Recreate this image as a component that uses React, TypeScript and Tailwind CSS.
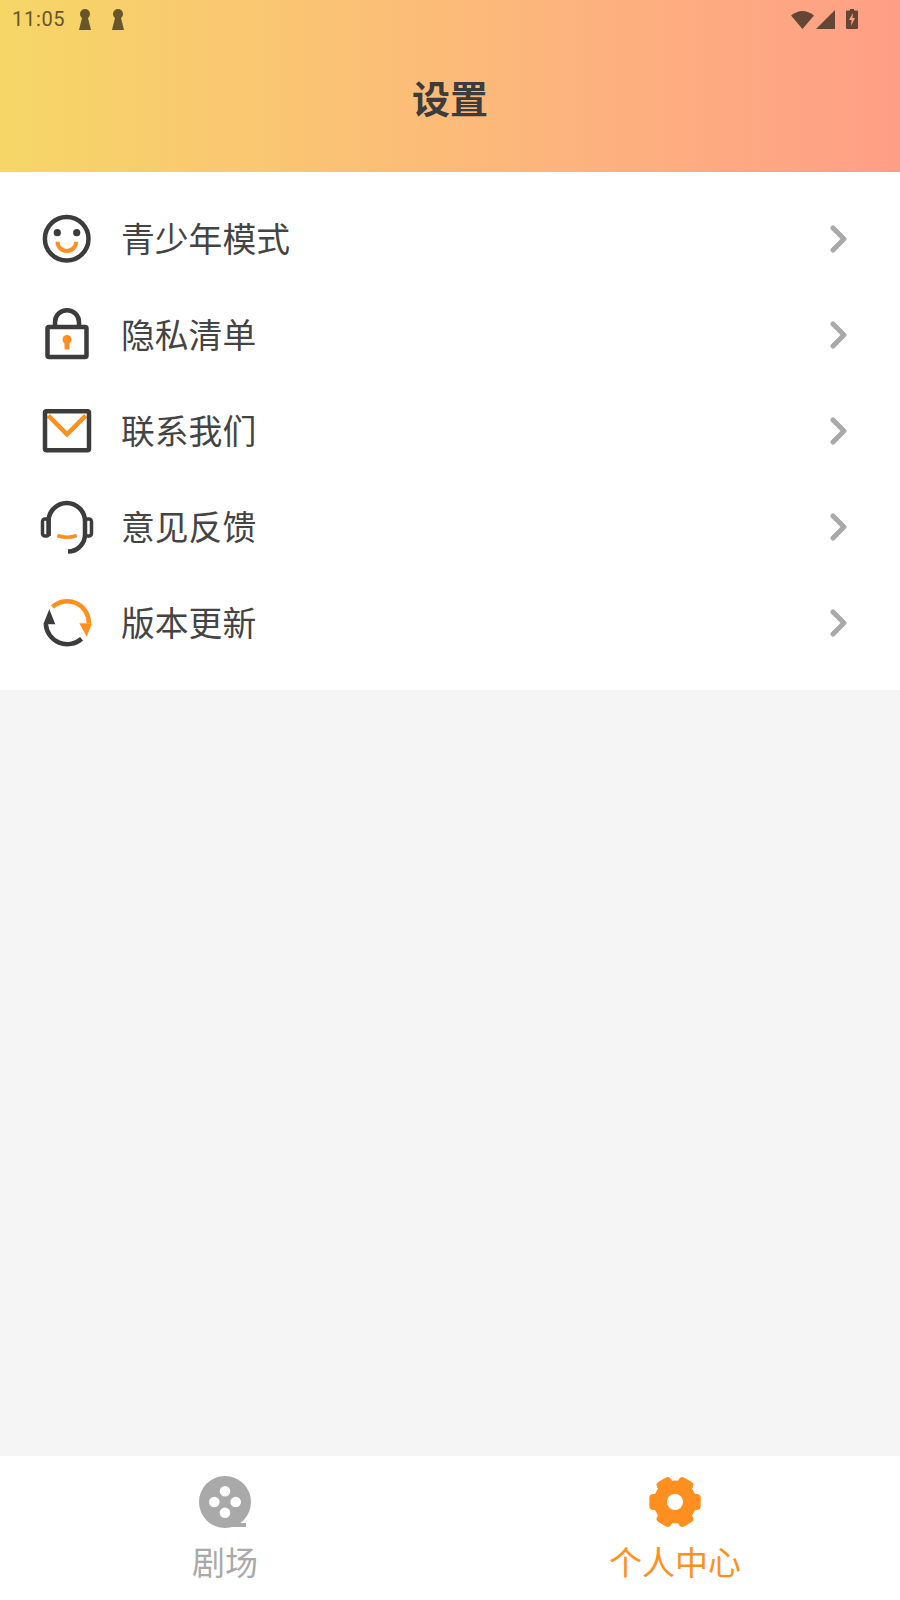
import React from 'react';

const ORANGE = '#ff9020';
const DARK = '#3c3c3c';

const SmileIcon = () => (
    <svg width="56" height="56" viewBox="0 0 56 56" fill="none">
        <circle cx="28.7" cy="27.7" r="21.8" stroke={DARK} strokeWidth="4.5" />
        <circle cx="19.3" cy="21.7" r="3.6" fill={DARK} />
        <circle cx="38.7" cy="21.7" r="3.6" fill={DARK} />
        <path d="M19.5 30.7a9.3 9.3 0 0 0 18.6 0" stroke={ORANGE} strokeWidth="4" />
    </svg>
);

const LockIcon = () => (
    <svg width="56" height="56" viewBox="0 0 56 56" fill="none">
        <path d="M17 20v-4.800a12 12 0 0 1 24 0V20" stroke={DARK} strokeWidth="4.500" />
        <rect x="9.500" y="20" width="39" height="30" rx="1.500" stroke={DARK} strokeWidth="4.500" />
        <circle cx="29" cy="32.500" r="4.500" fill={ORANGE} />
        <rect x="26.500" y="33" width="5" height="9.500" fill={ORANGE} />
    </svg>
);

const MailIcon = () => (
    <svg width="56" height="56" viewBox="0 0 56 56" fill="none">
        <path d="M10.300 12.700 29 31.300 47.700 12.700" stroke={ORANGE} strokeWidth="4.500" />
        <rect x="7" y="8.300" width="44" height="39" rx="1.500" stroke={DARK} strokeWidth="4.500" />
    </svg>
);

const HeadsetIcon = () => (
    <svg width="56" height="56" viewBox="0 0 56 56" fill="none">
        <path d="M10.500 22.200a18.250 18.250 0 0 1 36.500 0V35A17 17 0 0 1 30 52.500" stroke={DARK} strokeWidth="4.500" />
        <path d="M10.500 20v17" stroke={DARK} strokeWidth="4.500" />
        <rect x="4.500" y="20" width="6.500" height="17" rx="2.500" stroke={DARK} strokeWidth="3.500" />
        <rect x="47" y="20" width="6.500" height="17" rx="2.500" stroke={DARK} strokeWidth="3.500" />
        <path d="M19.300 36.500q9.700 3.500 19.400 0" stroke={ORANGE} strokeWidth="3.500" />
    </svg>
);

const RefreshIcon = () => (
    <svg width="56" height="56" viewBox="0 0 56 56" fill="none">
        <path d="M14.400 12.200A21.500 21.500 0 0 1 50.800 28.300" stroke={ORANGE} strokeWidth="4.500" />
        <path d="M41.300 28.300H54L48.700 41.700Z" fill={ORANGE} />
        <path d="M43.600 43.700A21.500 21.500 0 0 1 7.800 29" stroke={DARK} strokeWidth="4.500" />
        <path d="M5.300 29.300H17.300L11.300 14.300Z" fill={DARK} />
    </svg>
);

const Chevron = () => (
    <svg width="18" height="28" viewBox="0 0 18 28" fill="none">
        <path d="M3 3l11 11L3 25" stroke="#a9a9a9" strokeWidth="5" strokeLinecap="round" strokeLinejoin="round" />
    </svg>
);

const Keyhole = () => (
    <svg width="12" height="21" viewBox="0 0 12 21">
        <circle cx="6" cy="5" r="5" fill="#67552c" />
        <path d="M3.500 7h5L12 21H0Z" fill="#67552c" />
    </svg>
);

const FilmIcon = () => (
    <svg width="60" height="60" viewBox="0 0 60 60">
        <circle cx="30" cy="30" r="26" fill="#a9a9a9" />
        <rect x="30" y="51" width="21" height="4" fill="#a9a9a9" />
        <circle cx="30" cy="19.300" r="5.300" fill="#fff" />
        <circle cx="40.700" cy="30" r="5.300" fill="#fff" />
        <circle cx="30" cy="40.700" r="5.300" fill="#fff" />
        <circle cx="19.300" cy="30" r="5.300" fill="#fff" />
    </svg>
);

const GearIcon = () => (
    <svg width="60" height="60" viewBox="0 0 60 60">
        <circle cx="30" cy="30" r="21.500" fill={ORANGE} />
        <g fill={ORANGE}>
            <rect x="4.300" y="22" width="51.400" height="16" rx="4" />
            <rect x="4.300" y="22" width="51.400" height="16" rx="4" transform="rotate(60 30 30)" />
            <rect x="4.300" y="22" width="51.400" height="16" rx="4" transform="rotate(120 30 30)" />
        </g>
        <circle cx="30" cy="30" r="8" fill="#fff" />
    </svg>
);

const rows = [
    { label: '青少年模式', icon: <SmileIcon /> },
    { label: '隐私清单', icon: <LockIcon /> },
    { label: '联系我们', icon: <MailIcon /> },
    { label: '意见反馈', icon: <HeadsetIcon /> },
    { label: '版本更新', icon: <RefreshIcon /> },
];

const App: React.FC = () => {
    return (
        <div className="w-[900px] h-[1600px] flex flex-col bg-[#f5f5f5] font-['Noto_Sans_CJK_SC',sans-serif]">
            <header className="h-[172px] shrink-0 bg-gradient-to-r from-[#f6d666] to-[#ff9e86]">
                <div className="h-[38px] flex items-center pl-[12px] pr-[42px]">
                    <span className="font-['Roboto',sans-serif] text-[20px] leading-none tracking-[0.7px] text-[#67552c]">11:05</span>
                    <span className="ml-[14px] flex"><Keyhole /></span>
                    <span className="ml-[21px] flex"><Keyhole /></span>
                    <div className="ml-auto flex items-center">
                        <svg width="23" height="19" viewBox="0 0 23 19">
                            <path d="M0 5.500Q11.500-3.500 23 5.500L11.500 19Z" fill="#654536" />
                        </svg>
                        <svg className="ml-[2px]" width="19" height="19" viewBox="0 0 19 19">
                            <path d="M19 0V19H0Z" fill="#654536" />
                        </svg>
                        <svg className="ml-[11px]" width="12" height="20" viewBox="0 0 12 20">
                            <path d="M4 0h4v1.500h3a1 1 0 0 1 1 1V19a1 1 0 0 1-1 1H1a1 1 0 0 1-1-1V2.500a1 1 0 0 1 1-1h3Z" fill="#654536" />
                            <path d="M7 4 3 11h2.500L5 17l4-8H6.500Z" fill="#ff9f82" />
                        </svg>
                    </div>
                </div>
                <h1 className="mt-[34px] text-center text-[38px] leading-[50px] font-bold text-[#3c3c3c]">设置</h1>
            </header>

            <ul className="bg-white py-[19px]">
                {rows.map(row => (
                    <li key={row.label} className="h-[96px] flex items-center pl-[38px] pr-[52px]">
                        <span className="flex w-[56px] h-[56px]">{row.icon}</span>
                        <span className="ml-[27px] pb-[2px] text-[33.800px] leading-none text-[#444444]">{row.label}</span>
                        <span className="ml-auto flex"><Chevron /></span>
                    </li>
                ))}
            </ul>

            <div className="flex-1" />

            <nav className="h-[144px] shrink-0 bg-white grid grid-cols-2">
                <div className="flex flex-col items-center pt-[16px]">
                    <FilmIcon />
                    <span className="mt-[6px] text-[33px] leading-[46px] text-[#a9a9a9]">剧场</span>
                </div>
                <div className="flex flex-col items-center pt-[16px]">
                    <GearIcon />
                    <span className="mt-[6px] text-[33px] leading-[46px] text-[#ff9020]">个人中心</span>
                </div>
            </nav>
        </div>
    );
};

export default App;
